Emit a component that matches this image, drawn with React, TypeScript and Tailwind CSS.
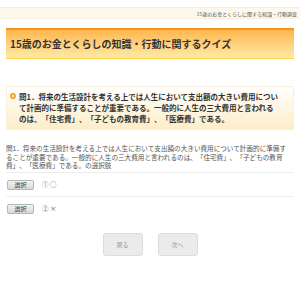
export default function App() {
  const jp = { fontFamily: '"Noto Sans CJK JP", "Noto Sans", sans-serif' };

  return (
    <div className="w-[300px] h-[284px] bg-white overflow-hidden [text-spacing-trim:space-all]" style={jp}>
      {/* header strip */}
      <div className="mt-[7px] h-[12px] bg-[#fdf8ec] border-y border-[#f6efe0] flex items-center justify-end pr-[3px]">
        <span className="text-[5px] leading-none text-[#555]">15歳のお金とくらしに関する知識・行動調査</span>
      </div>

      {/* title */}
      <div className="mx-[6px] mt-[9px] h-[31px] border-t-2 border-b border-t-[#f7941d] border-b-[#ffd84a] bg-gradient-to-b from-[#fdb64c] to-[#ffeaa6] flex items-center pl-[4px]">
        <h1 className="text-[10px] font-bold text-[#333] leading-none">
          15歳のお金とくらしの知識・行動に関するクイズ
        </h1>
      </div>

      {/* question */}
      <div className="mx-[6px] mt-[27px] h-[44px] border border-[#f7f0e0] rounded-[2px] bg-gradient-to-b from-white to-[#fdedc8] flex pt-[4px] pl-[3px]">
        <span className="mt-[2px] w-[6px] h-[6px] rounded-full border-2 border-[#f5a623] shrink-0" />
        <p className="ml-[3px] text-[7.5px] font-bold leading-[11px] text-[#333]">
          問1．将来の生活設計を考える上では人生において支出額の大きい費用につい
          <br />
          て計画的に準備することが重要である。一般的に人生の三大費用と言われる
          <br />
          のは、「住宅費」、「子どもの教育費」、「医療費」である。
        </p>
      </div>

      {/* description */}
      <p className="mx-[6px] mt-[14px] text-[6.6px] leading-[8.7px] text-[#555]">
        問1．将来の生活設計を考える上では人生において支出額の大きい費用について計画的に準備す
        <br />
        ることが重要である。一般的に人生の三大費用と言われるのは、「住宅費」、「子どもの教育
        <br />
        費」、「医療費」である。の選択肢
      </p>

      {/* choices */}
      <div className="mx-[6px] mt-[2px] border-t border-[#eee]">
        <div className="h-[24px] flex items-center gap-[8px] border-b border-[#eee] pl-[1px]">
          <button className="w-[27px] h-[10px] rounded-[2px] border border-[#b5b5b5] bg-gradient-to-b from-[#f4f4f4] to-[#d8d8d8] text-[6px] leading-none text-[#333]">
            選択
          </button>
          <span className="text-[6.5px] text-[#666]">① ○</span>
        </div>
        <div className="h-[24px] flex items-center gap-[8px] pl-[1px]">
          <button className="w-[27px] h-[10px] rounded-[2px] border border-[#b5b5b5] bg-gradient-to-b from-[#f4f4f4] to-[#d8d8d8] text-[6px] leading-none text-[#333]">
            選択
          </button>
          <span className="text-[6.5px] text-[#666]">② ×</span>
        </div>
      </div>

      {/* nav */}
      <div className="mt-[12px] flex justify-center gap-[15px]">
        <button className="w-[40px] h-[23px] rounded-[3px] border border-[#dcdcdc] bg-[#ebebeb] text-[6px] text-[#999]">
          戻る
        </button>
        <button className="w-[40px] h-[23px] rounded-[3px] border border-[#dcdcdc] bg-[#ebebeb] text-[6px] text-[#999]">
          次へ
        </button>
      </div>
    </div>
  );
}
